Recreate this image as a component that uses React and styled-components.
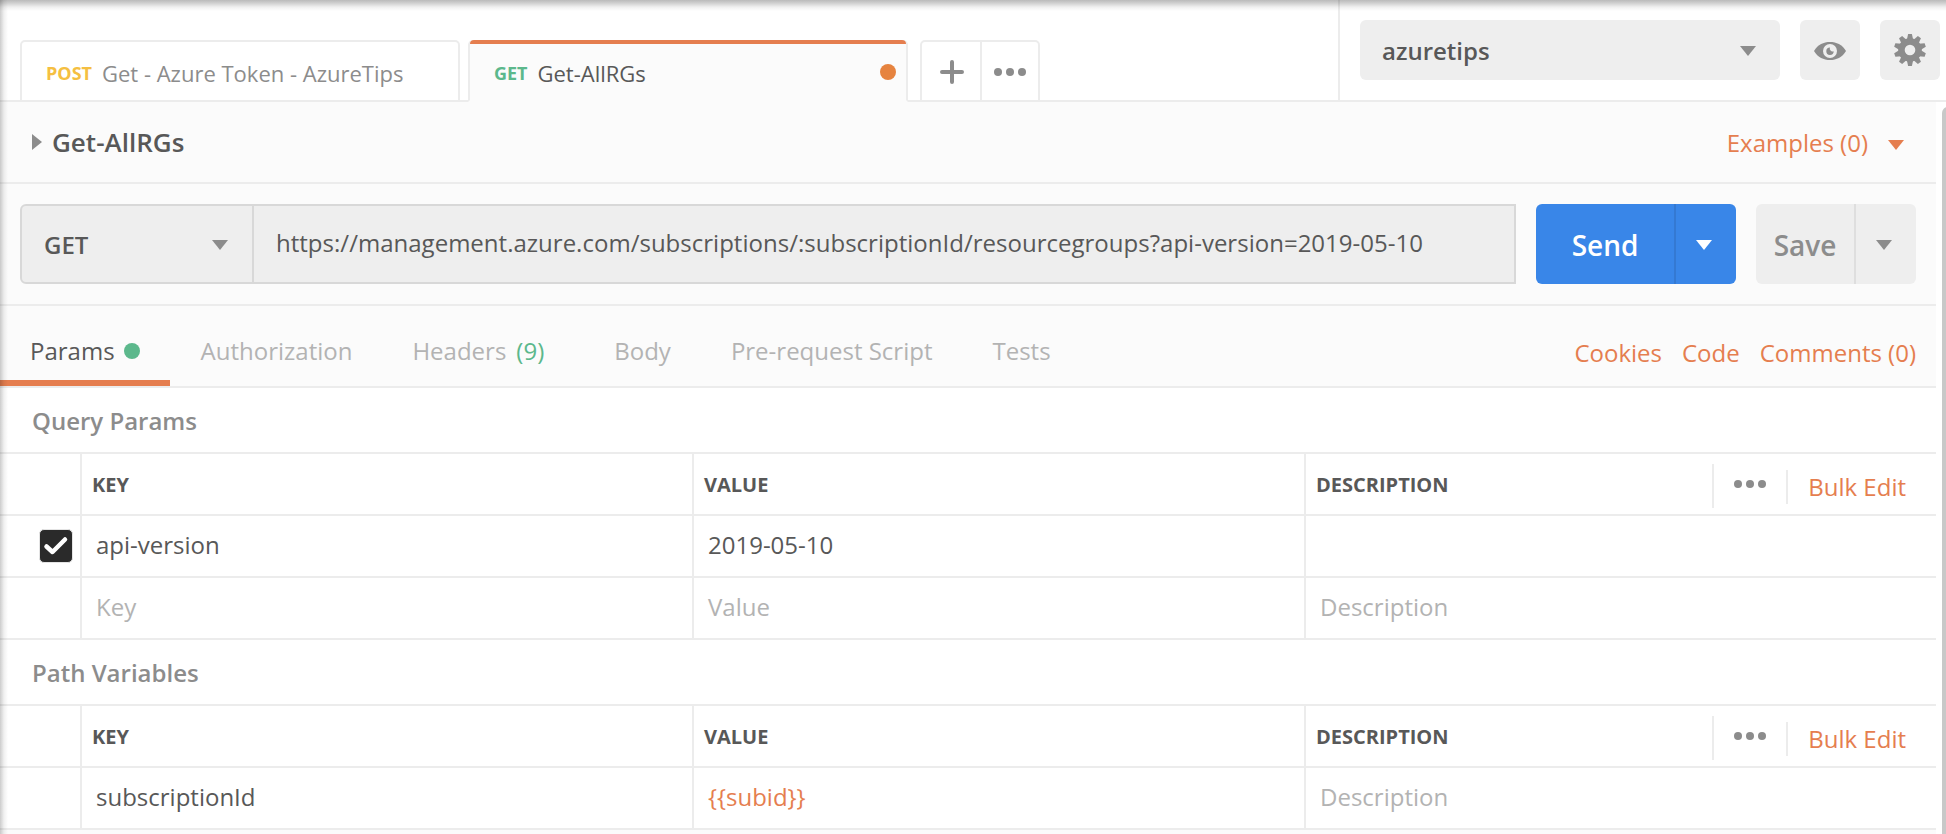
import React from 'react';
import styled, { createGlobalStyle, css } from 'styled-components';

const c = {
  line: '#ececec',
  panel: '#fbfbfb',
  field: '#eeeeee',
  fieldLine: '#d8d8d8',
  text: '#585858',
  muted: '#8c8c8c',
  faint: '#b3b3b3',
  orange: '#e57e4f',
  green: '#5cb88c',
  blue: '#3986e8',
};

const GlobalStyle = createGlobalStyle`
  *, *::before, *::after { box-sizing: border-box; }
  body { margin: 0; overflow: hidden; background: #fff; font-family: "Open Sans", "Noto Sans", sans-serif; }
  button { font: inherit; border: 0; padding: 0; margin: 0; }
  svg { display: block; flex: none; }
`;

const Window = styled.div`
  position: relative;
  display: flex;
  flex-direction: column;
  width: 1946px;
  height: 834px;
  overflow: hidden;
  font-size: 24px;
  color: ${c.text};
  white-space: nowrap;
  &::before, &::after {
    content: '';
    position: absolute;
    z-index: 5;
    top: 0;
    left: 0;
    pointer-events: none;
  }
  &::before {
    width: 100%;
    height: 11px;
    background: linear-gradient(rgba(0,0,0,.27), rgba(0,0,0,.18) 30%, rgba(0,0,0,.06) 65%, transparent);
  }
  &::after {
    width: 8px;
    height: 100%;
    background: linear-gradient(90deg, rgba(0,0,0,.2), rgba(0,0,0,.06) 50%, transparent);
  }
`;

const TopBar = styled.header`
  display: flex;
  flex: none;
  height: 102px;
`;

const TabStrip = styled.div`
  display: flex;
  align-items: flex-end;
  width: 1338px;
  flex: none;
`;

const Baseline = styled.div`
  height: 100%;
  width: ${p => p.$w ? p.$w + 'px' : 'auto'};
  flex: ${p => p.$w ? 'none' : 1};
  border-bottom: 2px solid ${c.line};
`;

const Tab = styled.div`
  display: flex;
  align-items: center;
  flex: none;
  width: 440px;
  height: 62px;
  padding: 4px 10px 0 24px;
  border: 2px solid ${c.line};
  border-radius: 5px 5px 0 0;
  font-size: 22px;
  color: ${p => p.$active ? c.text : c.muted};
  ${p => p.$active && css`
    position: relative;
    background: ${c.panel};
    border-bottom-color: ${c.panel};
    border-top: 0;
    padding-top: 6px;
    &::before {
      content: '';
      position: absolute;
      top: 0;
      left: 0;
      right: 0;
      height: 4px;
      background: ${c.orange};
      border-radius: 4px 4px 0 0;
    }
  `}
`;

const Method = styled.span`
  width: ${p => p.$w}px;
  font-size: 18px;
  font-weight: 700;
  line-height: 28px;
  color: ${p => p.$color};
`;

const TabName = styled.span`
  flex: 1;
  line-height: 30px;
`;

const Dot = styled.i`
  display: block;
  width: 16px;
  height: 16px;
  border-radius: 50%;
  background: ${p => p.$color};
`;

const UnsavedDot = styled(Dot)`
  margin-bottom: 2px;
`;

const TabTools = styled.div`
  display: flex;
  width: 120px;
  height: 62px;
  border: 2px solid ${c.line};
  border-radius: 5px 5px 0 0;
`;

const TabTool = styled.button`
  display: flex;
  align-items: center;
  justify-content: center;
  width: 58px;
  padding: 2px 0 0 2px;
  background: none;
  & + & {
    padding-left: 0;
    border-left: 2px solid ${c.line};
  }
`;

const EnvBar = styled.div`
  display: flex;
  align-items: flex-start;
  gap: 20px;
  flex: 1;
  padding: 20px 0 0 20px;
  border-left: 2px solid ${c.line};
  border-bottom: 2px solid ${c.line};
`;

const EnvSelect = styled.div`
  display: flex;
  align-items: center;
  justify-content: space-between;
  width: 420px;
  height: 60px;
  padding: 2px 24px 0 22px;
  border-radius: 6px;
  background: ${c.field};
  font-weight: 600;
  line-height: 58px;
`;

const IconButton = styled.button`
  display: grid;
  place-items: center;
  width: 60px;
  height: 60px;
  padding-top: ${p => p.$drop || 0}px;
  border-radius: 6px;
  background: ${c.field};
`;

const Caret = styled.i`
  display: block;
  border: 8px solid transparent;
  border-bottom: 0;
  border-top: 10px solid ${p => p.$color || c.muted};
`;

const Body = styled.div`
  display: flex;
  flex: 1;
  min-height: 0;
`;

const Content = styled.main`
  display: flex;
  flex-direction: column;
  width: 1936px;
`;

const Gutter = styled.div`
  flex: 1;
  padding: 5px 0 0 6px;
`;

const Thumb = styled.div`
  width: 12px;
  height: 760px;
  border-radius: 8px;
  background: #c8c8c8;
`;

const TitleRow = styled.div`
  display: flex;
  align-items: center;
  height: 82px;
  padding: 0 32px;
  background: ${c.panel};
  border-bottom: 2px solid ${c.line};
`;

const Expand = styled.i`
  border: 8px solid transparent;
  border-right: 0;
  border-left: 10px solid ${c.muted};
  margin-right: 10px;
`;

const Title = styled.h1`
  flex: 1;
  margin: 0;
  font-size: 26px;
  font-weight: 600;
  line-height: 80px;
`;

const Examples = styled.div`
  display: flex;
  align-items: center;
  gap: 20px;
  padding-top: 2px;
  line-height: 76px;
  color: ${c.orange};
  ${Caret} { margin-top: 4px; }
`;

const RequestRow = styled.div`
  display: flex;
  height: 122px;
  padding: 20px;
  background: ${c.panel};
  border-bottom: 2px solid ${c.line};
`;

const UrlBox = styled.div`
  display: flex;
  width: 1496px;
  height: 80px;
  background: ${c.field};
  border: 2px solid ${c.fieldLine};
  border-radius: 6px 0 0 6px;
`;

const MethodSelect = styled.div`
  display: flex;
  align-items: center;
  justify-content: space-between;
  width: 232px;
  padding: 2px 24px 0 22px;
  border-right: 2px solid ${c.fieldLine};
  font-weight: 600;
  line-height: 74px;
`;

const Url = styled.div`
  padding-left: 22px;
  line-height: 73px;
  letter-spacing: 0.012px;
`;

const SplitButton = styled.div`
  display: flex;
  width: ${p => p.$w}px;
  height: 80px;
  margin-left: 20px;
  border-radius: 6px;
  background: ${p => p.$primary ? c.blue : c.field};
  color: ${p => p.$primary ? '#fff' : c.muted};
  font-size: 28px;
  font-weight: 600;
`;

const SplitLabel = styled.button`
  flex: 1;
  padding-top: 2px;
  color: inherit;
  background: none;
`;

const SplitMenu = styled.button`
  display: grid;
  place-items: center;
  width: 62px;
  padding: 2px 4px 0 0;
  background: none;
  border-left: 2px solid ${p => p.$line};
`;

const SubTabs = styled.nav`
  display: flex;
  height: 82px;
  padding-right: 20px;
  background: ${c.panel};
  border-bottom: 2px solid ${c.line};
`;

const SubTab = styled.div`
  display: flex;
  align-items: center;
  gap: 10px;
  padding: 10px ${p => p.$wide ? 40 : 30}px 0 30px;
  line-height: 70px;
  color: ${c.faint};
  ${p => p.$active && css`
    gap: 9px;
    margin-right: 1px;
    color: ${c.text};
    box-shadow: inset 0 -6px ${c.orange};
  `}
`;

const Count = styled.span`
  color: ${c.green};
`;

const Links = styled.div`
  display: flex;
  gap: 20px;
  margin-left: auto;
  padding-top: 10px;
  line-height: 74px;
  color: ${c.orange};
`;

const SectionTitle = styled.h2`
  height: 66px;
  margin: 0;
  padding-left: 32px;
  border-bottom: 2px solid ${c.line};
  font-size: 24px;
  font-weight: 600;
  line-height: 66px;
  color: ${c.muted};
`;

const Row = styled.div`
  display: grid;
  grid-template-columns: 80px 612px 612px 1fr;
  height: 62px;
  border-bottom: 2px solid ${c.line};
`;

const Cell = styled.div`
  display: flex;
  padding-left: 14px;
  border-left: 2px solid ${c.line};
  line-height: 57px;
  color: ${p => p.$color || c.text};
`;

const HeadCell = styled(Cell)`
  padding-left: 10px;
  font-size: 20px;
  font-weight: 700;
  line-height: 62px;
`;

const CheckCell = styled.div`
  padding: 13px 0 0 39px;
`;

const Checkbox = styled.div`
  display: grid;
  place-items: center;
  width: 34px;
  height: 34px;
  border: 1px solid #e4e4e4;
  border-radius: 5px;
  background: #2a2a2a;
`;

const Actions = styled.div`
  display: flex;
  align-items: flex-start;
  margin-left: auto;
  padding: 10px 30px 0 0;
  font-size: 24px;
  font-weight: 400;
  color: ${c.orange};
`;

const More = styled.div`
  display: flex;
  justify-content: center;
  width: 74px;
  height: 44px;
  padding-top: 16px;
  border-left: 2px solid ${c.line};
`;

const BulkEdit = styled.div`
  height: 34px;
  margin-top: 6px;
  padding-left: 20px;
  border-left: 2px solid ${c.line};
  line-height: 34px;
`;

const Footer = styled.div`
  flex: 1;
  background: ${c.panel};
`;

const Dots = () => (
  <svg width="32" height="8" fill={c.muted}>
    <circle cx="4" cy="4" r="4" />
    <circle cx="16" cy="4" r="4" />
    <circle cx="28" cy="4" r="4" />
  </svg>
);

const PlusIcon = () => (
  <svg width="24" height="24" stroke={c.muted} strokeWidth="4" strokeLinecap="round">
    <path d="M12 2v20M2 12h20" />
  </svg>
);

const EyeIcon = () => (
  <svg width="32" height="20" viewBox="0 0 32 20">
    <path d="M0 10C4 3.5 9.500 1 16 1s12 2.500 16 9c-4 6.500-9.500 9-16 9S4 16.500 0 10z" fill={c.muted} />
    <circle cx="16" cy="10" r="7" fill={c.field} />
    <path d="M16 6.500A3.700 3.700 0 1 0 19.700 10.200A2.800 2.800 0 0 1 16 6.500z" fill={c.muted} />
  </svg>
);

const GearIcon = () => (
  <svg width="32" height="32" viewBox="-16 -16 32 32">
    <g fill={c.muted}>
      {Array.from({ length: 10 }, (_, i) => (
        <path key={i} d="M-3.200-10L-1.900-16H1.900L3.200-10z" transform={`rotate(${i * 36})`} />
      ))}
      <circle r="11.800" />
    </g>
    <circle r="5.300" fill={c.field} />
  </svg>
);

const CheckIcon = () => (
  <svg width="26" height="20" fill="none" stroke="#fff" strokeWidth="4.500" strokeLinecap="round" strokeLinejoin="round">
    <path d="M3.500 10.500L9.500 16L22 3.500" />
  </svg>
);

const TableHead = () => (
  <Row>
    <div />
    <HeadCell>KEY</HeadCell>
    <HeadCell>VALUE</HeadCell>
    <HeadCell>
      DESCRIPTION
      <Actions>
        <More><Dots /></More>
        <BulkEdit>Bulk Edit</BulkEdit>
      </Actions>
    </HeadCell>
  </Row>
);

export default function App() {
  return (
    <Window>
      <GlobalStyle />
      <TopBar>
        <TabStrip>
          <Baseline $w={20} />
          <Tab>
            <Method $w={56} $color="#f5bf42">POST</Method>
            <TabName>Get - Azure Token - AzureTips</TabName>
          </Tab>
          <Baseline $w={8} />
          <Tab $active>
            <Method $w={43.5} $color={c.green}>GET</Method>
            <TabName>Get-AllRGs</TabName>
            <UnsavedDot $color="#e6833f" />
          </Tab>
          <Baseline $w={12} />
          <TabTools>
            <TabTool><PlusIcon /></TabTool>
            <TabTool><Dots /></TabTool>
          </TabTools>
          <Baseline />
        </TabStrip>
        <EnvBar>
          <EnvSelect>azuretips<Caret /></EnvSelect>
          <IconButton $drop={2} aria-label="Environment quick look"><EyeIcon /></IconButton>
          <IconButton aria-label="Manage environments"><GearIcon /></IconButton>
        </EnvBar>
      </TopBar>
      <Body>
        <Content>
          <TitleRow>
            <Expand />
            <Title>Get-AllRGs</Title>
            <Examples>Examples (0)<Caret $color={c.orange} /></Examples>
          </TitleRow>
          <RequestRow>
            <UrlBox>
              <MethodSelect>GET<Caret /></MethodSelect>
              <Url>https://management.azure.com/subscriptions/:subscriptionId/resourcegroups?api-version=2019-05-10</Url>
            </UrlBox>
            <SplitButton $primary $w={200}>
              <SplitLabel>Send</SplitLabel>
              <SplitMenu $line="#3479d2"><Caret $color="#fff" /></SplitMenu>
            </SplitButton>
            <SplitButton $w={160}>
              <SplitLabel>Save</SplitLabel>
              <SplitMenu $line="#dedede"><Caret /></SplitMenu>
            </SplitButton>
          </RequestRow>
          <SubTabs>
            <SubTab $active>Params<Dot $color={c.green} /></SubTab>
            <SubTab>Authorization</SubTab>
            <SubTab $wide>Headers<Count>(9)</Count></SubTab>
            <SubTab>Body</SubTab>
            <SubTab>Pre-request Script</SubTab>
            <SubTab>Tests</SubTab>
            <Links><span>Cookies</span><span>Code</span><span>Comments (0)</span></Links>
          </SubTabs>
          <SectionTitle>Query Params</SectionTitle>
          <TableHead />
          <Row>
            <CheckCell><Checkbox><CheckIcon /></Checkbox></CheckCell>
            <Cell>api-version</Cell>
            <Cell>2019-05-10</Cell>
            <Cell />
          </Row>
          <Row>
            <div />
            <Cell $color={c.faint}>Key</Cell>
            <Cell $color={c.faint}>Value</Cell>
            <Cell $color={c.faint}>Description</Cell>
          </Row>
          <SectionTitle>Path Variables</SectionTitle>
          <TableHead />
          <Row>
            <div />
            <Cell>subscriptionId</Cell>
            <Cell $color={c.orange}>{'{{subid}}'}</Cell>
            <Cell $color={c.faint}>Description</Cell>
          </Row>
          <Footer />
        </Content>
        <Gutter><Thumb /></Gutter>
      </Body>
    </Window>
  );
}
